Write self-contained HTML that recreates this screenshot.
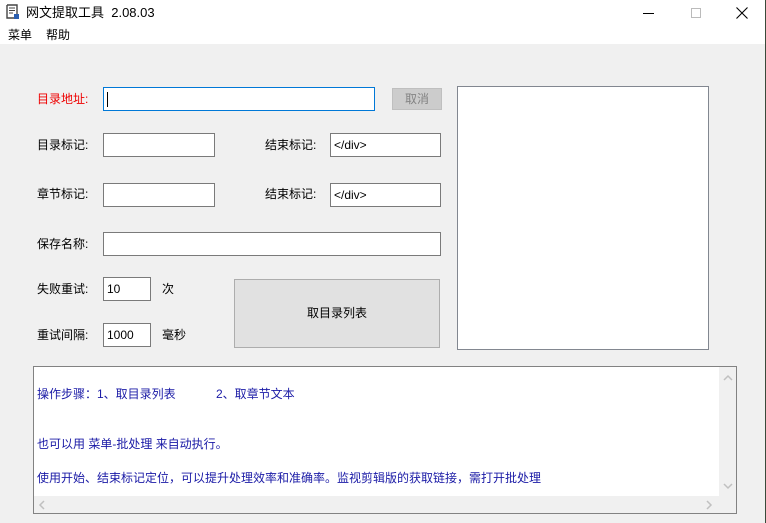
<!DOCTYPE html>
<html><head><meta charset="utf-8"><style>
*{margin:0;padding:0;box-sizing:border-box}
body{width:766px;height:523px;background:#f0f0f0;font-family:"Liberation Sans","Noto Sans CJK SC",sans-serif;font-size:12px;color:#000;position:relative;overflow:hidden}
.a{position:absolute}
.in{position:absolute;background:#fff;border:1px solid #7a7a7a;padding:0 0 0 3px;line-height:22px;font-size:12px}
.lb{position:absolute;line-height:16px;font-size:12px}
</style></head><body>
<div class="a" style="left:0;top:0;width:766px;height:44px;background:#fff"></div>
<div class="a" style="right:0;top:0;width:1px;height:523px;background:#3a4a3a"></div>
<svg class="a" style="left:6px;top:4px" width="14" height="16" viewBox="0 0 14 16"><path d="M1 1h10v9" fill="none" stroke="#444" stroke-width="1.4"/><path d="M1 1v13h7" fill="none" stroke="#444" stroke-width="1.4"/><path d="M3 4h6M3 6.5h6M3 9h4" stroke="#444"/><rect x="8" y="10" width="5" height="5" fill="#2b5fb0"/></svg>
<div class="a" style="left:26px;top:4px;font-size:13px;line-height:17px">网文提取工具&nbsp;&nbsp;2.08.03</div>
<div class="a" style="left:643px;top:13px;width:11px;height:1px;background:#000"></div>
<div class="a" style="left:691px;top:8px;width:10px;height:10px;border:1px solid #bbb"></div>
<svg class="a" style="left:736px;top:7px" width="12" height="12"><path d="M0.5 0.5L11.5 11.5M11.5 0.5L0.5 11.5" stroke="#000" stroke-width="1.1"/></svg>
<div class="a" style="left:8px;top:27px;font-size:12px;line-height:16px">菜单</div>
<div class="a" style="left:46px;top:27px;font-size:12px;line-height:16px">帮助</div>

<div class="lb" style="left:37px;top:91px;color:#e00">目录地址:</div>
<div class="in" style="left:103px;top:87px;width:272px;height:24px;border-color:#0078d7"><span style="display:inline-block;width:1px;height:15px;background:#000;vertical-align:middle;margin-left:0"></span></div>
<div class="a" style="left:392px;top:88px;width:50px;height:22px;background:#ccc;border:1px solid #bfbfbf;color:#838383;text-align:center;line-height:20px">取消</div>

<div class="lb" style="left:37px;top:137px">目录标记:</div>
<div class="in" style="left:103px;top:133px;width:112px;height:24px"></div>
<div class="lb" style="left:265px;top:137px">结束标记:</div>
<div class="in" style="left:330px;top:133px;width:111px;height:24px">&lt;/div&gt;</div>

<div class="lb" style="left:37px;top:186px">章节标记:</div>
<div class="in" style="left:103px;top:183px;width:112px;height:24px"></div>
<div class="lb" style="left:265px;top:186px">结束标记:</div>
<div class="in" style="left:330px;top:183px;width:111px;height:24px">&lt;/div&gt;</div>

<div class="lb" style="left:37px;top:236px">保存名称:</div>
<div class="in" style="left:103px;top:232px;width:338px;height:24px"></div>

<div class="lb" style="left:37px;top:281px">失败重试:</div>
<div class="in" style="left:103px;top:277px;width:48px;height:24px">10</div>
<div class="lb" style="left:162px;top:281px">次</div>
<div class="lb" style="left:37px;top:327px">重试间隔:</div>
<div class="in" style="left:103px;top:323px;width:48px;height:24px">1000</div>
<div class="lb" style="left:162px;top:327px">毫秒</div>
<div class="a" style="left:234px;top:279px;width:206px;height:69px;background:#e1e1e1;border:1px solid #adadad;text-align:center;line-height:67px">取目录列表</div>

<div class="a" style="left:457px;top:86px;width:252px;height:264px;background:#fff;border:1px solid #828790"></div>

<div class="a" style="left:33px;top:366px;width:704px;height:148px;background:#f0f0f0;border:1px solid #828282"></div>
<div class="a" style="left:34px;top:367px;width:685px;height:129px;background:#fff;color:#1a1aa6;font-size:12px;line-height:16px">
<div class="a" style="left:3px;top:19px;white-space:nowrap">操作步骤：1、取目录列表</div>
<div class="a" style="left:182px;top:19px;white-space:nowrap">2、取章节文本</div>
<div class="a" style="left:3px;top:69px;white-space:nowrap">也可以用 菜单-批处理 来自动执行。</div>
<div class="a" style="left:3px;top:103px;white-space:nowrap">使用开始、结束标记定位，可以提升处理效率和准确率。监视剪辑版的获取链接，需打开批处理</div>
</div>
<svg class="a" style="left:723px;top:374px" width="10" height="8"><path d="M1 6L5 2L9 6" fill="none" stroke="#c0c0c0" stroke-width="1.5"/></svg>
<svg class="a" style="left:723px;top:482px" width="10" height="8"><path d="M1 2L5 6L9 2" fill="none" stroke="#c0c0c0" stroke-width="1.5"/></svg>
<svg class="a" style="left:38px;top:500px" width="8" height="10"><path d="M6 1L2 5L6 9" fill="none" stroke="#c0c0c0" stroke-width="1.5"/></svg>
<svg class="a" style="left:705px;top:500px" width="8" height="10"><path d="M2 1L6 5L2 9" fill="none" stroke="#c0c0c0" stroke-width="1.5"/></svg>
</body></html>
